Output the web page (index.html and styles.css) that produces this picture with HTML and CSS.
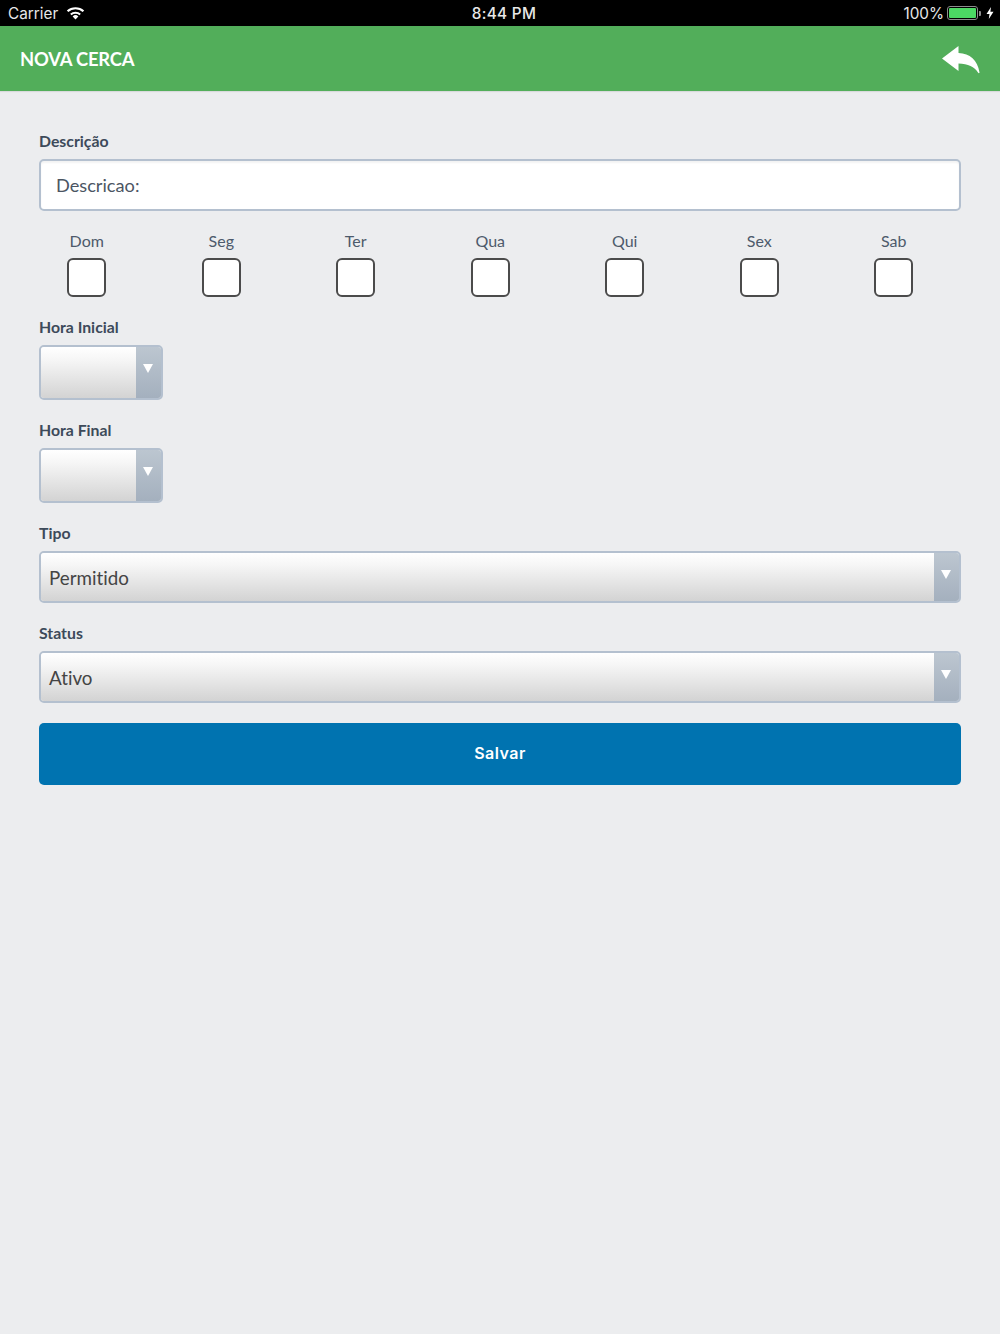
FILE: index.html
```html
<!DOCTYPE html>
<html lang="pt">
<head>
  <meta charset="UTF-8" />
  <title>Nova Cerca</title>
  <link rel="stylesheet" href="styles.css">
</head>
<body>

  <!-- Status bar -->
  <div class="status-bar">
    <div class="status-left">
      <span>Carrier</span>
      <svg class="wifi" width="19" height="14" viewBox="0 0 18 14" preserveAspectRatio="none">
        <path d="M9 13.5 6.3 10.4a3.9 3.9 0 0 1 5.4 0z" fill="#fff"/>
        <path d="M4.600 8.500a6.400 6.400 0 0 1 8.800 0" fill="none" stroke="#fff" stroke-width="2"/>
        <path d="M1.500 5.200a10.800 10.800 0 0 1 15 0" fill="none" stroke="#fff" stroke-width="2"/>
      </svg>
    </div>
    <div class="status-time">8:44 PM</div>
    <div class="status-right">
      <span>100%</span>
      <div class="battery"><div class="battery-fill"></div></div>
      <div class="battery-tip"></div>
      <svg class="bolt" width="8" height="12" viewBox="0 0 8 12">
        <path d="M5 0 .5 7H3.500L2.800 12 7.500 4.800H4.400z" fill="#fff"/>
      </svg>
    </div>
  </div>

  <!-- Header -->
  <div class="header">
    <h1>NOVA CERCA</h1>
    <svg class="back-icon" width="38" height="28" viewBox="0 0 38 28">
      <path d="M0 12.500 16.500 0V7C28 7.500 35.500 14 37.500 26.500 37.500 27.500 36.500 27.500 36 26.500 32.500 21 26 17.500 16.500 17.500V25z" fill="#fff"/>
    </svg>
  </div>

  <!-- Form -->
  <div class="form">
    <label class="field-label">Descrição</label>
    <div class="text-input">Descricao:</div>

    <div class="days">
      <div class="day"><span>Dom</span><div class="check"></div></div>
      <div class="day"><span>Seg</span><div class="check"></div></div>
      <div class="day"><span>Ter</span><div class="check"></div></div>
      <div class="day"><span>Qua</span><div class="check"></div></div>
      <div class="day"><span>Qui</span><div class="check"></div></div>
      <div class="day"><span>Sex</span><div class="check"></div></div>
      <div class="day"><span>Sab</span><div class="check"></div></div>
    </div>

    <label class="field-label">Hora Inicial</label>
    <div class="select select-small">
      <div class="select-value"></div>
      <div class="select-arrow"><div class="arrow"></div></div>
    </div>

    <label class="field-label">Hora Final</label>
    <div class="select select-small">
      <div class="select-value"></div>
      <div class="select-arrow"><div class="arrow"></div></div>
    </div>

    <label class="field-label">Tipo</label>
    <div class="select">
      <div class="select-value">Permitido</div>
      <div class="select-arrow"><div class="arrow"></div></div>
    </div>

    <label class="field-label">Status</label>
    <div class="select">
      <div class="select-value">Ativo</div>
      <div class="select-arrow"><div class="arrow"></div></div>
    </div>

    <button class="save-btn">Salvar</button>
  </div>

</body>
</html>
```

FILE: styles.css
```css
* {
  margin: 0; padding: 0;
  box-sizing: border-box;
}

body, html {
  height: 100%;
  font-family: 'Lato', sans-serif;
  font-variant-ligatures: none;
  background: #ecedef;
  color: #3d4a5a;
}

.status-bar {
  height: 26px;
  background: #000;
  color: #e8e8e8;
  display: grid;
  grid-template-columns: 1fr auto 1fr;
  align-items: center;
  padding: 0 6px 0 8px;
  font-family: 'Inter', sans-serif;
  font-size: 15.3px;
}

.status-left {
  display: flex;
  align-items: center;
  gap: 8px;
}

.status-time {
  font-weight: 500;
  letter-spacing: 0.3px;
  padding-left: 6px;
}

.status-right {
  display: flex;
  align-items: center;
  justify-content: flex-end;
}

.battery {
  width: 31px;
  height: 14px;
  margin-left: 3px;
  border: 1px solid #8c8c8c;
  border-radius: 3px;
  padding: 1px;
}

.battery-fill {
  height: 100%;
  background: #4cd964;
  border-radius: 1px;
}

.battery-tip {
  width: 2px;
  height: 5px;
  margin-left: 1px;
  background: #8c8c8c;
  border-radius: 0 1px 1px 0;
}

.bolt {
  margin-left: 5px;
}

.header {
  height: 65px;
  background: #52ae5a;
  display: flex;
  align-items: center;
  justify-content: space-between;
  padding: 0 20px;
  box-shadow: 0 1px 1px rgba(0, 0, 0, 0.08);
}

.header h1 {
  font-size: 18.4px;
  font-weight: 700;
  color: #fff;
  letter-spacing: -0.2px;
}

.back-icon {
  margin-top: 2px;
}

.form {
  padding: 40px 39px 0;
}

.field-label {
  display: block;
  font-size: 15.8px;
  line-height: 20px;
  font-weight: 700;
  color: #3d4a5a;
  margin-bottom: 8px;
}

.text-input {
  height: 52px;
  background: #fff;
  border: 2px solid #b4c0cf;
  border-radius: 5px;
  display: flex;
  align-items: center;
  padding-left: 15px;
  font-size: 18.2px;
  color: #4b5563;
  box-shadow: inset 0 2px 2px rgba(0, 0, 0, 0.05);
}

.days {
  display: grid;
  grid-template-columns: repeat(7, 134.5px);
  margin: 20px 0 20px -19.5px;
}

.day {
  display: flex;
  flex-direction: column;
  align-items: center;
  font-size: 16px;
  color: #4d5a6b;
}

.day span {
  line-height: 20px;
  margin-bottom: 7px;
}

.check {
  width: 39px;
  height: 39px;
  background: #fff;
  border: 2px solid #4b4b4b;
  border-radius: 6px;
}

.select {
  height: 52px;
  display: flex;
  border: 2px solid #b4c0cf;
  border-radius: 5px;
  overflow: hidden;
  margin-bottom: 20px;
}

.select-small {
  width: 124px;
  height: 55px;
}

.select-value {
  flex: 1;
  display: flex;
  align-items: center;
  padding-left: 8px;
  font-size: 18.8px;
  color: #444;
  background: linear-gradient(to bottom, #ffffff 0%, #f6f6f6 25%, #d3d3d3 100%);
}

.select-arrow {
  width: 25px;
  display: flex;
  justify-content: center;
  padding: 17px 1px 0 0;
  background: linear-gradient(to bottom, #bcc6d0, #a4b0be);
}

.arrow {
  width: 0;
  height: 0;
  border-left: 5px solid transparent;
  border-right: 5px solid transparent;
  border-top: 9px solid #fff;
}

.save-btn {
  display: block;
  width: 100%;
  height: 62px;
  padding-bottom: 2px;
  background: #0073b0;
  color: #fff;
  font-family: 'Inter', sans-serif;
  font-size: 16px;
  font-weight: 600;
  letter-spacing: 0.5px;
  border: none;
  border-radius: 5px;
  cursor: pointer;
}
```
